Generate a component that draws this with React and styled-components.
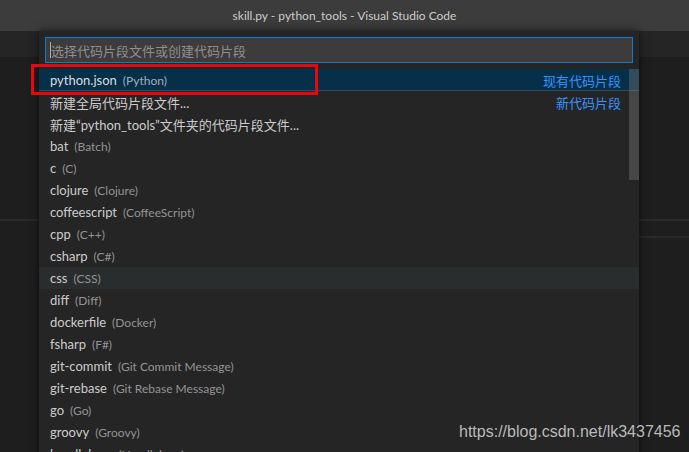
import React from "react";
import styled, { createGlobalStyle } from "styled-components";

const GlobalStyle = createGlobalStyle`
  html, body { margin: 0; padding: 0; background: #1e1e1e; }
  * { box-sizing: border-box; }
`;

const UI_FONT = `Lato, "Noto Sans CJK SC", "Noto Sans", sans-serif`;

const Page = styled.div`
  position: relative;
  width: 689px;
  height: 452px;
  overflow: hidden;
  display: flex;
  flex-direction: column;
  background: #1e1e1e;
  font-family: ${UI_FONT};
`;

const TitleBar = styled.div`
  height: 31px;
  flex: none;
  background: #3c3c3c;
  color: #cccccc;
  font-size: 12px;
  display: flex;
  align-items: center;
  justify-content: center;
  padding-bottom: 1px;
`;

const TabBar = styled.div`
  height: 26px;
  flex: none;
  background: #252526;
`;

const Editor = styled.div`
  flex: 1;
  display: flex;
  flex-direction: column;
  background: #1e1e1e;
`;

const EditorUpper = styled.div`
  height: 162px;
  flex: none;
`;

const Divider = styled.div`
  height: 2px;
  flex: none;
  background: #2a2a2a;
`;

const EditorLower = styled.div`
  display: flex;
  flex: 1;
`;

const LowerLeft = styled.div`
  width: 639px;
  flex: none;
`;

const LowerRight = styled.div`
  flex: 1;
  height: 17px;
  border-bottom: 2px solid #2a2a2a;
`;

const Widget = styled.div`
  position: absolute;
  left: 39px;
  top: 31px;
  width: 600px;
  height: 440px;
  background: #252526;
  box-shadow: 0 0 8px rgba(0, 0, 0, 0.65);
  padding-top: 6px;
  display: flex;
  flex-direction: column;
`;

const InputBox = styled.div`
  margin: 0 6px;
  height: 26px;
  background: #3c3c3c;
  border: 1px solid #0e7ad3;
  display: flex;
  align-items: center;
  padding-left: 4px;
  font-size: 13px;
  color: #8f8f8f;
`;

const Caret = styled.span`
  width: 1px;
  height: 16px;
  background: #aeafad;
`;

const List = styled.div`
  position: relative;
  margin-top: 6px;
  display: flex;
  flex-direction: column;
`;

const Row = styled.div`
  height: 22px;
  flex: none;
  display: flex;
  align-items: center;
  padding: 0 18px 0 11px;
  font-size: 13px;
  color: ${(p) => (p.$selected ? "#dcdcdc" : "#cccccc")};
  background: ${(p) =>
    p.$selected ? "#062f4a" : p.$hover ? "#2a2d2e" : "transparent"};
  box-shadow: ${(p) => (p.$selected ? "inset 0 -1px 0 #34495a" : "none")};
`;

const Label = styled.span`
  white-space: nowrap;
`;

const Desc = styled.span`
  margin-left: 6px;
  font-size: 12px;
  color: ${(p) => (p.$selected ? "#a3adb5" : "#949494")};
  white-space: nowrap;
`;

const Group = styled.span`
  margin-left: auto;
  color: #3794ff;
  font-size: 13px;
  white-space: nowrap;
`;

const Scrollbar = styled.div`
  position: absolute;
  right: 0;
  top: 0;
  width: 10px;
  height: 111px;
  background: rgba(121, 121, 121, 0.4);
`;

const Annotation = styled.div`
  position: absolute;
  left: 31px;
  top: 64px;
  width: 287px;
  height: 31px;
  border: 3px solid #e8060f;
`;

const Watermark = styled.div`
  position: absolute;
  left: 459px;
  top: 423px;
  font-family: "Liberation Sans", Arial, sans-serif;
  font-size: 16px;
  color: rgba(215, 215, 215, 0.85);
  white-space: nowrap;
`;

const items = [
  { label: "python.json", desc: "(Python)", group: "现有代码片段", selected: true },
  { label: "新建全局代码片段文件...", group: "新代码片段" },
  { label: "新建“python_tools”文件夹的代码片段文件..." },
  { label: "bat", desc: "(Batch)" },
  { label: "c", desc: "(C)" },
  { label: "clojure", desc: "(Clojure)" },
  { label: "coffeescript", desc: "(CoffeeScript)" },
  { label: "cpp", desc: "(C++)" },
  { label: "csharp", desc: "(C#)" },
  { label: "css", desc: "(CSS)", hover: true },
  { label: "diff", desc: "(Diff)" },
  { label: "dockerfile", desc: "(Docker)" },
  { label: "fsharp", desc: "(F#)" },
  { label: "git-commit", desc: "(Git Commit Message)" },
  { label: "git-rebase", desc: "(Git Rebase Message)" },
  { label: "go", desc: "(Go)" },
  { label: "groovy", desc: "(Groovy)" },
  { label: "handlebars", desc: "(Handlebars)" },
];

export default function App() {
  return (
    <>
      <GlobalStyle />
      <Page>
        <TitleBar>skill.py - python_tools - Visual Studio Code</TitleBar>
        <TabBar />
        <Editor>
          <EditorUpper />
          <Divider />
          <EditorLower>
            <LowerLeft />
            <LowerRight />
          </EditorLower>
        </Editor>

        <Widget>
          <InputBox>
            <Caret />
            选择代码片段文件或创建代码片段
          </InputBox>
          <List>
            {items.map((it) => (
              <Row key={it.label} $selected={it.selected} $hover={it.hover}>
                <Label>{it.label}</Label>
                {it.desc && <Desc $selected={it.selected}>{it.desc}</Desc>}
                {it.group && <Group>{it.group}</Group>}
              </Row>
            ))}
            <Scrollbar />
          </List>
        </Widget>

        <Annotation />
        <Watermark>https://blog.csdn.net/lk3437456</Watermark>
      </Page>
    </>
  );
}
